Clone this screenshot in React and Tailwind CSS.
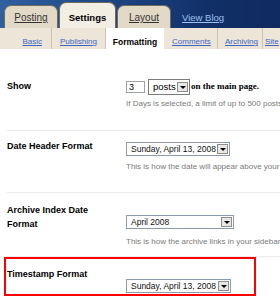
function Arrow() {
  return (
    <div className="mr-[1px] flex h-[10px] w-[11px] shrink-0 items-center justify-center border border-[#8e8e8e] bg-[#e9e7e1]">
      <div className="h-0 w-0 border-x-[3px] border-t-[3px] border-x-transparent border-t-black" />
    </div>
  );
}

function Select({ value, className }) {
  return (
    <div className={`flex h-[14px] items-center border border-[#8a9bb0] bg-white ${className}`}>
      <span className="pl-[4px] text-[8.5px] leading-none text-[#111] whitespace-nowrap">{value}</span>
      <div className="ml-auto">
        <Arrow />
      </div>
    </div>
  );
}

function Help({ children, className = '' }) {
  return (
    <div className={`whitespace-nowrap text-[8px] leading-[10px] text-[#7a7a7a] ${className}`}>{children}</div>
  );
}

export default function App() {
  return (
    <div className="relative h-[302px] w-[280px] overflow-hidden bg-white font-['Liberation_Sans',Arial,sans-serif]">
      {/* Main tabs */}
      <div className="flex h-[28px] items-end bg-[linear-gradient(90deg,#2f609f,#1c4584_40%,#112f68_75%,#0f2a5e)] pl-[4px]">
        <div className="flex h-[23px] w-[54px] items-start justify-center rounded-t-[7px] border border-b-0 border-[#6f6a60] bg-[#e3d9c7] pt-[7px]">
          <span className="text-[10px] leading-[10px] text-[#333] underline">Posting</span>
        </div>
        <div className="ml-[1px] flex h-[26px] w-[57px] items-start justify-center rounded-t-[7px] border border-b-0 border-[#6f6a60] bg-[#f3eee4] pt-[10px]">
          <span className="text-[9.5px] font-bold leading-[10px] text-black">Settings</span>
        </div>
        <div className="ml-[1px] flex h-[23px] w-[54px] items-start justify-center rounded-t-[7px] border border-b-0 border-[#6f6a60] bg-[#e3d9c7] pt-[7px]">
          <span className="text-[10px] leading-[10px] text-[#333] underline">Layout</span>
        </div>
        <span className="mb-[5px] ml-[11px] text-[9.5px] leading-[10px] text-[#9fc3ee] underline">View Blog</span>
      </div>

      {/* Sub tabs */}
      <div className="flex h-[21px] items-stretch bg-[#ede5d7] text-[8px] leading-[10px]">
        <div className="flex w-[52px] items-end justify-end border-r border-[#cfc3ae] pb-[2px] pr-[9px]">
          <span className="text-[#3a67c4] underline">Basic</span>
        </div>
        <div className="flex w-[54px] items-end border-r border-[#cfc3ae] pb-[2px] pl-[8px]">
          <span className="text-[#3a67c4] underline">Publishing</span>
        </div>
        <div className="flex w-[58px] items-end justify-center bg-white pb-[2px]">
          <span className="text-[8.5px] font-bold text-black">Formatting</span>
        </div>
        <div className="flex w-[54px] items-end border-r border-[#cfc3ae] pb-[2px] pl-[8px]">
          <span className="text-[#3a67c4] underline">Comments</span>
        </div>
        <div className="flex w-[45px] items-end border-r border-[#cfc3ae] pb-[2px] pl-[7px]">
          <span className="text-[#3a67c4] underline">Archiving</span>
        </div>
        <div className="flex items-end pb-[2px] pl-[2px]">
          <span className="text-[#3a67c4] underline">Site</span>
        </div>
      </div>

      {/* Show */}
      <div className="ml-[7px] flex h-[82px] border-b border-[#ebebeb]">
        <div className="w-[119px] shrink-0 pt-[30px] text-[9px] font-bold leading-[14px] text-black">Show</div>
        <div className="pt-[30px]">
          <div className="flex h-[16px] items-center">
            <div className="flex h-[12px] w-[19px] items-center border border-[#9aa3ab] pl-[2px] text-[9px] leading-none">3</div>
            <div className="ml-[3px] flex h-[16px] w-[42px] items-center border border-[#7b7b7b] bg-white">
              <span className="pl-[4px] text-[9.5px] leading-none">posts</span>
              <div className="ml-auto">
                <Arrow />
              </div>
            </div>
            <span className="ml-[1px] whitespace-nowrap font-['Liberation_Serif',serif] text-[9px] font-bold">on the main page.</span>
          </div>
          <Help className="mt-[4px]">If Days is selected, a limit of up to 500 posts will be enforced.</Help>
        </div>
      </div>

      {/* Date Header Format */}
      <div className="ml-[7px] flex h-[62px] border-b border-[#ebebeb]">
        <div className="w-[119px] shrink-0 pt-[8px] text-[9px] font-bold leading-[14px] text-black">Date Header Format</div>
        <div className="pt-[11px]">
          <Select value="Sunday, April 13, 2008" className="w-[104px]" />
          <Help className="mt-[6px]">This is how the date will appear above your posts.</Help>
        </div>
      </div>

      {/* Archive Index Date Format */}
      <div className="ml-[7px] flex h-[64px] border-b border-[#ebebeb]">
        <div className="w-[119px] shrink-0 pt-[10px] text-[9px] font-bold leading-[14px] text-black">
          Archive Index Date
          <br />
          Format
        </div>
        <div className="pt-[22px]">
          <Select value="April 2008" className="w-[108px]" />
          <Help className="mt-[8px]">This is how the archive links in your sidebar will appear.</Help>
        </div>
      </div>

      {/* Timestamp Format */}
      <div className="ml-[7px] flex h-[45px]">
        <div className="w-[119px] shrink-0 pt-[10px] text-[9px] font-bold leading-[14px] text-black">Timestamp Format</div>
        <div className="pt-[22px]">
          <Select value="Sunday, April 13, 2008" className="w-[105px]" />
        </div>
      </div>

      {/* highlight */}
      <div className="absolute left-[4px] top-[257px] h-[39px] w-[252px] border-2 border-[#ff0000]" />
    </div>
  );
}
